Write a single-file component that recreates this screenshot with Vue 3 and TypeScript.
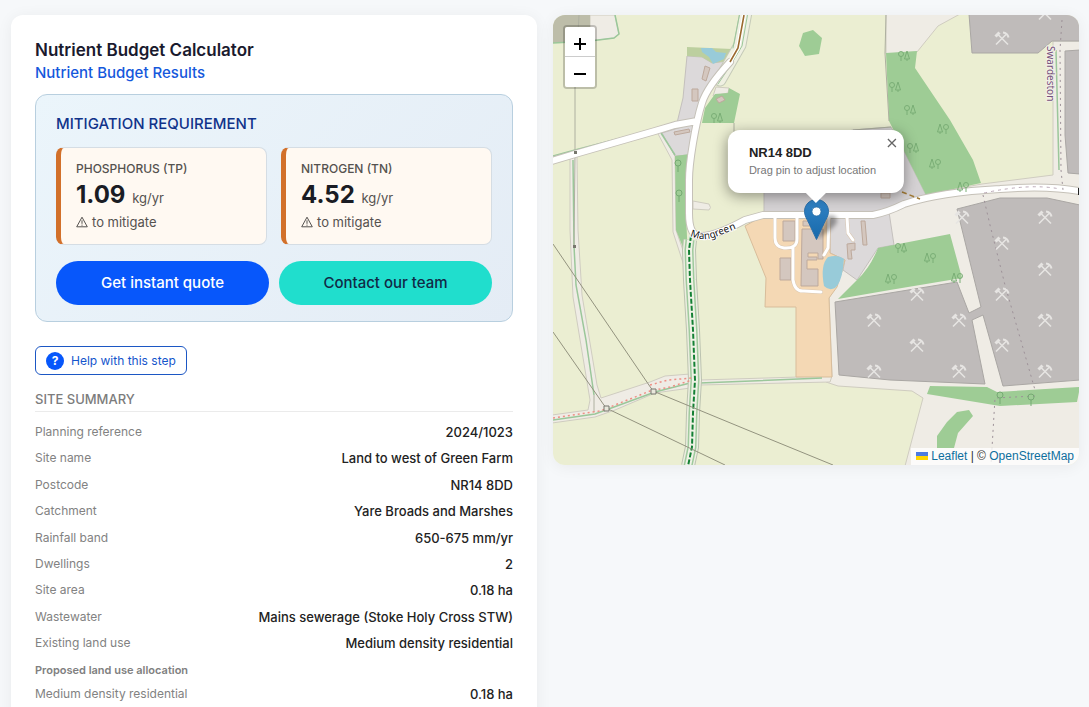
<script setup lang="ts">
interface Nutrient { label: string; value: string }
interface Row { label: string; value: string }
interface Point { x: number; y: number }

const nutrients: Nutrient[] = [
  { label: 'PHOSPHORUS (TP)', value: '1.09' },
  { label: 'NITROGEN (TN)', value: '4.52' },
]

const summary: Row[] = [
  { label: 'Planning reference', value: '2024/1023' },
  { label: 'Site name', value: 'Land to west of Green Farm' },
  { label: 'Postcode', value: 'NR14 8DD' },
  { label: 'Catchment', value: 'Yare Broads and Marshes' },
  { label: 'Rainfall band', value: '650-675 mm/yr' },
  { label: 'Dwellings', value: '2' },
  { label: 'Site area', value: '0.18 ha' },
  { label: 'Wastewater', value: 'Mains sewerage (Stoke Holy Cross STW)' },
  { label: 'Existing land use', value: 'Medium density residential' },
]

const allocation: Row[] = [{ label: 'Medium density residential', value: '0.18 ha' }]

const at = (pairs: number[][]): Point[] => pairs.map(([x, y]) => ({ x, y }))

const quarrySymbols = at([
  [1002, 38], [1045, 13], [962, 217], [1045, 217], [1002, 243], [1045, 269], [1002, 294], [1045, 320],
  [1002, 345], [1045, 371], [917, 294], [874, 320], [959, 320], [917, 345], [874, 371], [959, 371],
])
const treePairs = at([
  [717, 118], [904, 56], [895, 87], [910, 110], [913, 148], [901, 248],
])
const treePairsFlipped = at([[943, 129], [935, 164], [963, 187], [930, 258], [891, 279], [957, 278]])
const singleTrees = at([[678, 165], [679, 195], [1000, 397], [1031, 399]])
</script>

<template>
  <main class="page">
    <section class="card">
      <h1 class="title">Nutrient Budget Calculator</h1>
      <p class="subtitle">Nutrient Budget Results</p>

      <section class="panel">
        <h2 class="panel-title">MITIGATION REQUIREMENT</h2>
        <div class="nutrients">
          <article v-for="n in nutrients" :key="n.label" class="nutrient">
            <h3 class="nutrient-label">{{ n.label }}</h3>
            <p class="nutrient-value"><strong>{{ n.value }}</strong> <span>kg/yr</span></p>
            <p class="nutrient-note">
              <svg class="warn" viewBox="0 0 12 12" aria-hidden="true">
                <path d="M6 1.2 11.3 10.8H.7Z" fill="none" stroke="currentColor" stroke-linejoin="round" />
                <path d="M6 4.3V7.8M6 8.6V9.7" stroke="currentColor" />
              </svg>
              to mitigate
            </p>
          </article>
        </div>
        <div class="actions">
          <button type="button" class="btn primary">Get instant quote</button>
          <button type="button" class="btn secondary">Contact our team</button>
        </div>
      </section>

      <button type="button" class="help"><span class="help-icon">?</span>Help with this step</button>

      <h2 class="section-title">SITE SUMMARY</h2>
      <dl class="rows">
        <div v-for="r in summary" :key="r.label" class="row">
          <dt>{{ r.label }}</dt>
          <dd>{{ r.value }}</dd>
        </div>
      </dl>
      <h3 class="sub-title">Proposed land use allocation</h3>
      <dl class="rows">
        <div v-for="r in allocation" :key="r.label" class="row">
          <dt>{{ r.label }}</dt>
          <dd>{{ r.value }}</dd>
        </div>
      </dl>
    </section>

    <section class="map" aria-label="Site location map">
      <svg class="tiles" viewBox="553 15 526 450" preserveAspectRatio="xMidYMid slice">
        <defs>
          <g id="hammers" fill="none" stroke="#e6e4e2" stroke-width="1.6">
            <path d="M-6 6.5 4.5 -4M6 6.5-4.5 -4" />
            <path d="M1 -5.5Q5.500 -5 6.500 -.5" stroke-width="2" />
            <path d="M-6.500 -1.500-2.500 -5.500" stroke-width="3" />
          </g>
          <g id="trees" fill="none" stroke="#7aae76" stroke-width="1">
            <circle cx="-3" cy="-2" r="2.5" />
            <path d="M-3 .5V5M3 3V5M3 -5 .5 3H5.500Z" />
          </g>
          <g id="tree" fill="none" stroke="#75aa72" stroke-width="1">
            <circle cx="0" cy="-2" r="3" />
            <path d="M0 1V7" />
          </g>
          <path id="mangreen" d="M690 236Q704 242 718 236T754 222" />
        </defs>

        <rect x="553" y="15" width="526" height="450" fill="#ebeed2" />

        <!-- open ground -->
        <g fill="#efece5" stroke="#cfccc0" stroke-width="1">
          <path d="M590 15H615L619 34 614 38 590 41Z" />
          <path d="M886 14H960L938 26 917 52 886 54Z" />
          <path d="M889 212 926 194 982 184 1053 175V41H1080V466H905L923 398 912 391 838 386 826 382 832 376 829 298 843 270Z" />
          <path d="M570 158 577 156 578 230 582 295 597 385 601 398 650 382 665 376 690 374V388L655 393 615 410 595 417 552 423V415L588 410 590 400 573 297 570 230Z" />
          <path d="M700 380 832 376 830 382 700 385Z" />
          <path d="M657 132 662 132 675 156 676 230 687 262 687 275 673 232 672 160Z" />
          <path d="M693 201 709 204Q712 208 709 210L693 209Z" />
          <path d="M716 87 729 88 728 93 713 96Z" />
        </g>
        <path d="M553 15H590V41L553 43Z" fill="#bdbda9" />

        <!-- settlement and farmyard -->
        <g fill="#dcd9da" stroke="#c4c0bd" stroke-width="1">
          <path d="M687 56 702 57 712 63 728 61 715 78 703 100 697 120 677 123 683 98Z" />
          <path d="M662 133 695 123 689 155 675 156Z" />
          <path d="M764 150 853 130 891 127 905 153 926 195 920 200 873 213 764 215Z" fill="#d5d2d4" />
          <path d="M830 216 889 212 894 245 878 248 857 280 843 270 845 260 830 253Z" />
        </g>
        <path d="M745 226 763 216H830V253L845 260 837 287 829 298 832 377H796V307H765L766 278Z" fill="#f4d8b4" stroke="#d8bd9b" />

        <!-- quarries -->
        <g fill="#bfbbba" stroke="#aaa7a4" stroke-width="1">
          <path d="M969 14H1080V41H1052L1038 53H972Z" />
          <path d="M1065 51 1080 50V174L1068 173 1065 135Z" />
          <path d="M957 209 1000 198H1047L1080 205V380L1003 386 983 315 972 320 985 384 890 380 839 375 835 302 957 282 969 313 981 307Z" />
        </g>

        <!-- woodland -->
        <g fill="#9ecc95">
          <path d="M803 33 813 30 822 38 819 54 805 56 799 46Z" />
          <path d="M886 53 917 51 915 68 950 120 973 160 981 183 926 195 905 153 889 121Z" />
          <path d="M838 299 857 280Q870 268 878 248L950 234 962 278 890 290Z" />
          <path d="M930 386 987 387 997 392 1080 387 1077 402 1000 406 927 394Z" />
          <path d="M957 412 969 410 973 416 958 433 954 448H937V436L947 422Z" />
          <path d="M715 94 728 93 729 88 740 94 734 123H702L705 108Z" />
          <path d="M675 156 690 154 687 180 686 213 688 260 676 230Z" />
          <path d="M687 47 732 49 728 61 712 63 702 57 687 56Z" fill="#bccf9f" />
        </g>

        <!-- water -->
        <g fill="#98cbd9">
          <path d="M701 48H712L716 52 726 53 724 59 713 64 709 57 702 52Z" />
          <path d="M828 257Q838 254 844 259L843 268Q841 283 835 288 829 291 824 286 820 265 828 257Z" />
        </g>

        <!-- hedges -->
        <g fill="none" stroke="#9bc79a" stroke-width="1.5">
          <path d="M553 43 590 41 614 38 619 34 615 15" />
          <path d="M553 156 575 150 660 128" />
          <path d="M573 160 574 246 576 285 586 340 594 395" />
          <path d="M553 420 595 414 655 392 690 383M700 383 822 378" />
          <path d="M661 133 675 155" />
          <path d="M1056 50 1059 170" />
        </g>
        <path d="M764 217V213L745 220 700 238M574 247 575 152 575 88 579 15M594 395V412M853 130 891 127M886 15 885 53 889 121M734 123V150" fill="none" stroke="#aeb0a0" />

        <!-- buildings -->
        <g fill="#d4c7bf" stroke="#bda99c" stroke-width="1">
          <path d="M705 66 710 68 706 81 702 79ZM692 89H698V101H692ZM674 132 689 129 690 132 675 135ZM716 99 722 96 725 100 719 103Z" />
          <path d="M783 221H795V241H783ZM780 258H791V280H780ZM803 221H823V226H803Z" />
          <path d="M802 229H823V259H818V253H808V257H817V260H807V269H818V286H801Z" />
          <path d="M861 221H865L867 245H863ZM847 244 855 243V250H851L852 259H848ZM881 193H890V198H881Z" />
        </g>

        <!-- roads -->
        <g fill="none" stroke-linecap="round" stroke-linejoin="round">
          <path d="M746 12 740 45 720 80" stroke="#c5cab8" stroke-width="13" />
          <path d="M746 12 740 45 720 80" stroke="#eff0e2" stroke-width="11" />
          <path d="M748 12 742 46 730 66 718 84M740 12 733 48" stroke="#9bc79a" stroke-width="1" />
          <g stroke="#c5c1b8" stroke-width="8">
            <path d="M548 162 575 154 655 131 675 125 697 121M730 62Q707 87 702 103T693 143 689 180V213Q689 236 700 236 714 237 745 220L763 215H873Q888 212 904 204 940 192 1000 189 1050 185 1084 192" />
          </g>
          <path d="M775 217V238Q775 247 784 248 797 249 797 239V217M793 248V280Q795 292 804 291L821 292M829 217 828 248 824 255M847 217 848 233 853 240" stroke="#d9c7b2" stroke-width="4" />
          <path d="M548 162 575 154 655 131 675 125 697 121M730 62Q707 87 702 103T693 143 689 180V213Q689 236 700 236 714 237 745 220L763 215H873Q888 212 904 204 940 192 1000 189 1050 185 1084 192" stroke="#fff" stroke-width="6" />
          <path d="M775 217V238Q775 247 784 248 797 249 797 239V217M793 248V280Q795 292 804 291L821 292M829 217 828 248 824 255M847 217 848 233 853 240" stroke="#fff" stroke-width="3" />
        </g>
        <path d="M744 15 738 48 730 62" fill="none" stroke="#fff" stroke-width="4" />
        <path d="M744 15 738 48 730 62" fill="none" stroke="#9b6a2f" stroke-width="1.6" />

        <!-- paths -->
        <g fill="none">
          <path d="M690 240 689 250 690 280 693 330 695 380 693 413 692 447 688 466" stroke="#bcc3b0" stroke-width="14" />
          <path d="M690 240 689 250 690 280 693 330 695 380 693 413 692 447 688 466" stroke="#eceee0" stroke-width="12" />
          <path d="M690 240 689 250 690 280 693 330 695 380 693 413 692 447 688 466" stroke="#9fca9d" stroke-width="9" />
          <path d="M690 240 689 250 690 280 693 330 695 380 693 413 692 447 688 466" stroke="#eff2e5" stroke-width="6" />
          <path d="M691 236 689 250 690 280 693 330 695 380 693 413 692 447 688 466" stroke="#138034" stroke-width="2" stroke-dasharray="5 2" />
          <path d="M553 418 600 411 650 391 670 387 692 380M650 385 668 380 692 378" stroke="#ee8f85" stroke-width="1.5" stroke-dasharray="2 3" />
          <path d="M1062 20 1060 50 1061 170 1063 190M983 195 990 225 1005 285 1035 390M1035 396 995 398 991 465" stroke="#9d9198" stroke-dasharray="2 4" />
          <path d="M984 193Q1030 183 1060 189" stroke="#bba9b7" stroke-dasharray="3 4" />
          <path d="M902 192 920 199" stroke="#a17a35" stroke-width="1.5" stroke-dasharray="5 3" />
        </g>

        <!-- power lines -->
        <g fill="none" stroke="#93937f">
          <path d="M553 244 653 391 745 429 833 465M553 332 606 408 725 465" />
          <path d="M651 389H656V394H651ZM604 406H609V411H604Z" fill="#e9e8dc" stroke="#77776e" />
        </g>
        <path d="M574 151H577V154H574ZM573 245H576V248H573Z" fill="#77776e" />

        <use v-for="p in quarrySymbols" :key="`q${p.x}-${p.y}`" href="#hammers" :x="p.x" :y="p.y" />
        <use v-for="p in treePairs" :key="`t${p.x}-${p.y}`" href="#trees" :x="p.x" :y="p.y" />
        <use v-for="p in treePairsFlipped" :key="`f${p.x}-${p.y}`" href="#trees" :transform="`translate(${p.x} ${p.y}) scale(-1 1)`" />
        <use v-for="p in singleTrees" :key="`s${p.x}-${p.y}`" href="#tree" :x="p.x" :y="p.y" />

        <text class="road-label"><textPath href="#mangreen">Mangreen</textPath></text>
        <text class="place-label" transform="translate(1047 46) rotate(90)">Swardeston</text>
        <path d="M1079 188V195" stroke="#222" stroke-width="2" />
      </svg>

      <div class="zoom">
        <button type="button" aria-label="Zoom in"><svg viewBox="0 0 12 12"><path d="M0 6H12M6 0V12" stroke="#000" stroke-width="2" /></svg></button>
        <button type="button" aria-label="Zoom out"><svg viewBox="0 0 12 12"><path d="M0 6H12" stroke="#000" stroke-width="2" /></svg></button>
      </div>

      <svg class="pin" viewBox="0 0 42 41" aria-hidden="true">
        <defs>
          <linearGradient id="pin-fill" x1="0" y1="0" x2="0" y2="1">
            <stop offset="0" stop-color="#3283c5" />
            <stop offset="1" stop-color="#1769ab" />
          </linearGradient>
          <filter id="pin-blur" x="-30%" y="-30%" width="160%" height="160%"><feGaussianBlur stdDeviation="2" /></filter>
        </defs>
        <path d="M13 40 22 18Q31 14 33 21 34 27 13 40Z" fill="#000" opacity=".35" filter="url(#pin-blur)" />
        <path d="M12.500 .5C5.500 .5 .5 6 .5 12.500 .5 17 3 20 5 24.500L12.500 40.500 20 24.500C22 20 24.500 17 24.500 12.500 24.500 6 19.500 .5 12.500 .5Z" fill="url(#pin-fill)" stroke="#2b6fa8" />
        <circle cx="12.500" cy="12.500" r="4.500" fill="#fff" stroke="#2a6ea6" stroke-width=".8" />
      </svg>

      <div class="popup">
        <strong>NR14 8DD</strong>
        <p>Drag pin to adjust location</p>
        <button type="button" aria-label="Close popup">
          <svg viewBox="0 0 10 10"><path d="M1 1 9 9M9 1 1 9" stroke="#666" stroke-width="1.3" /></svg>
        </button>
      </div>

      <div class="attribution">
        <a href="#"><svg class="flag" viewBox="0 0 12 8" aria-hidden="true"><path fill="#4c7be1" d="M0 0h12v4H0z" /><path fill="#ffd500" d="M0 4h12v4H0z" /></svg> Leaflet</a>
        | © <a href="#">OpenStreetMap</a>
      </div>
    </section>
  </main>
</template>

<style>
body {
  margin: 0;
  background: #f6f8fa;
}
</style>

<style scoped>
.page {
  box-sizing: border-box;
  display: grid;
  grid-template-columns: 1fr 1fr;
  align-items: start;
  gap: 16px;
  height: 100vh;
  padding: 15px 10px 0 11px;
  overflow: auto;
  scrollbar-width: none;
  font-family: Inter, "Liberation Sans", sans-serif;
  color: #1a1a2e;
}
h1, h2, h3, p, dl, dd {
  margin: 0;
}
button {
  font-family: inherit;
  cursor: pointer;
}
.card {
  box-sizing: border-box;
  min-height: 100vh;
  padding: 24px;
  border-radius: 12px;
  background: #fff;
  box-shadow: 0 2px 16px rgba(0, 0, 0, 0.06);
}
.title {
  font-size: 17px;
  line-height: 22px;
  font-weight: 600;
}
.subtitle {
  margin-top: 2px;
  font-size: 15px;
  line-height: 20px;
  font-weight: 500;
  color: #1558dc;
}
.panel {
  margin-top: 11px;
  padding: 16px 20px;
  border: 1px solid #b8cfdf;
  border-radius: 12px;
  background: linear-gradient(135deg, #ebf5fb, #e4ecf5);
}
.panel-title {
  font-size: 15px;
  line-height: 26px;
  font-weight: 500;
  color: #10338a;
}
.nutrients {
  display: grid;
  grid-template-columns: 1fr 1fr;
  gap: 14px;
  margin-top: 10px;
}
.nutrient {
  padding: 11px 15px;
  border: 1px solid #d5dde4;
  border-left: 5px solid #d2702a;
  border-radius: 8px;
  background: #fff9f2;
  color: #55524f;
}
.nutrient-label {
  font-size: 12px;
  line-height: 20px;
  font-weight: 500;
}
.nutrient-value {
  font-size: 24px;
  line-height: 32px;
}
.nutrient-value strong {
  font-weight: 700;
  color: #1a1c24;
}
.nutrient-value span {
  font-size: 13px;
  line-height: 1px;
}
.nutrient-note {
  display: flex;
  align-items: center;
  gap: 4px;
  font-size: 13px;
  line-height: 22px;
}
.warn {
  width: 12px;
  height: 12px;
}
.actions {
  display: grid;
  grid-template-columns: 1fr 1fr;
  gap: 10px;
  margin-top: 16px;
}
.btn {
  height: 44px;
  padding: 0 16px 2px;
  border: 0;
  border-radius: 22px;
  font-size: 15px;
  font-weight: 500;
}
.primary {
  background: #0757fb;
  color: #fff;
}
.secondary {
  background: #20decd;
  color: #112a46;
}
.help {
  display: flex;
  align-items: center;
  gap: 7px;
  height: 29px;
  margin-top: 24px;
  padding: 0 10px;
  border: 1px solid #1c57c4;
  border-radius: 6px;
  background: #fff;
  color: #1555cc;
  font-size: 12px;
}
.help-icon {
  width: 18px;
  border-radius: 50%;
  background: #0757fb;
  color: #fff;
  font-size: 12px;
  line-height: 18px;
  font-weight: 700;
}
.section-title {
  margin-top: 12px;
  border-bottom: 1px solid #ebebeb;
  font-size: 13px;
  line-height: 24px;
  font-weight: 500;
  color: #7c7c7c;
}
.section-title + .rows {
  margin-top: 7px;
}
.rows {
  font-size: 14px;
  line-height: 160%;
}
.row {
  display: flex;
  justify-content: space-between;
  padding: 2px 0;
}
dt {
  font-size: 12px;
  color: #828282;
}
dd {
  font-size: 13px;
  font-weight: 500;
  color: #222;
}
.sub-title {
  padding: 3px 0 1px;
  font-size: 11px;
  line-height: 20px;
  font-weight: 600;
  color: #808080;
}
.map {
  position: relative;
  height: 450px;
  overflow: hidden;
  border-radius: 12px;
  box-shadow: 0 2px 16px rgba(0, 0, 0, 0.06);
  font-family: "Liberation Sans", Arial, sans-serif;
}
.tiles {
  display: block;
  width: 100%;
  height: 100%;
}
.road-label,
.place-label {
  font-family: "Noto Sans", sans-serif;
  font-size: 10px;
  fill: #111;
  stroke: #fff;
  stroke-width: 2px;
  paint-order: stroke;
}
.place-label {
  fill: #75507b;
  stroke: #f3f1e8;
}
.zoom {
  position: absolute;
  top: 10px;
  left: 10px;
  display: grid;
  border: 2px solid rgba(0, 0, 0, 0.2);
  border-radius: 4px;
  background-clip: padding-box;
}
.zoom button {
  box-sizing: border-box;
  display: grid;
  place-items: center;
  width: 30px;
  height: 30px;
  padding: 4px 0 0;
  border: 0;
  border-radius: 0 0 2px 2px;
  background: #fff;
}
.zoom button:first-child {
  border-bottom: 1px solid #ccc;
  border-radius: 2px 2px 0 0;
}
.zoom svg {
  width: 12px;
  height: 12px;
}
.pin {
  position: absolute;
  left: calc(50% - 12px);
  bottom: 50%;
  width: 42px;
  height: 41px;
}
.popup {
  position: absolute;
  left: 50%;
  bottom: calc(50% + 47px);
  box-sizing: border-box;
  padding: 14px 28px 14px 21px;
  border-radius: 12px;
  background: #fff;
  box-shadow: 0 3px 14px rgba(0, 0, 0, 0.4);
  transform: translateX(-50%);
  white-space: nowrap;
}
.popup::after {
  content: "";
  position: absolute;
  top: 100%;
  left: calc(50% - 10px);
  border: 10px solid transparent;
  border-top-color: #fff;
  border-bottom: 0;
}
.popup strong {
  display: block;
  font-size: 13px;
  line-height: 18px;
  color: #222;
}
.popup p {
  font-size: 11px;
  line-height: 17px;
  color: #777;
}
.popup button {
  position: absolute;
  top: 1px;
  right: 0;
  display: grid;
  place-items: center;
  width: 24px;
  height: 24px;
  padding: 0;
  border: 0;
  background: none;
}
.popup button svg {
  width: 10px;
  height: 10px;
}
.attribution {
  position: absolute;
  right: 0;
  bottom: 0;
  padding: 0 5px;
  background: rgba(255, 255, 255, 0.8);
  color: #333;
  font-size: 12px;
  line-height: 17px;
}
.attribution a {
  color: #0e6f9e;
  text-decoration: none;
}
.flag {
  width: 12px;
  height: 8px;
}
</style>
